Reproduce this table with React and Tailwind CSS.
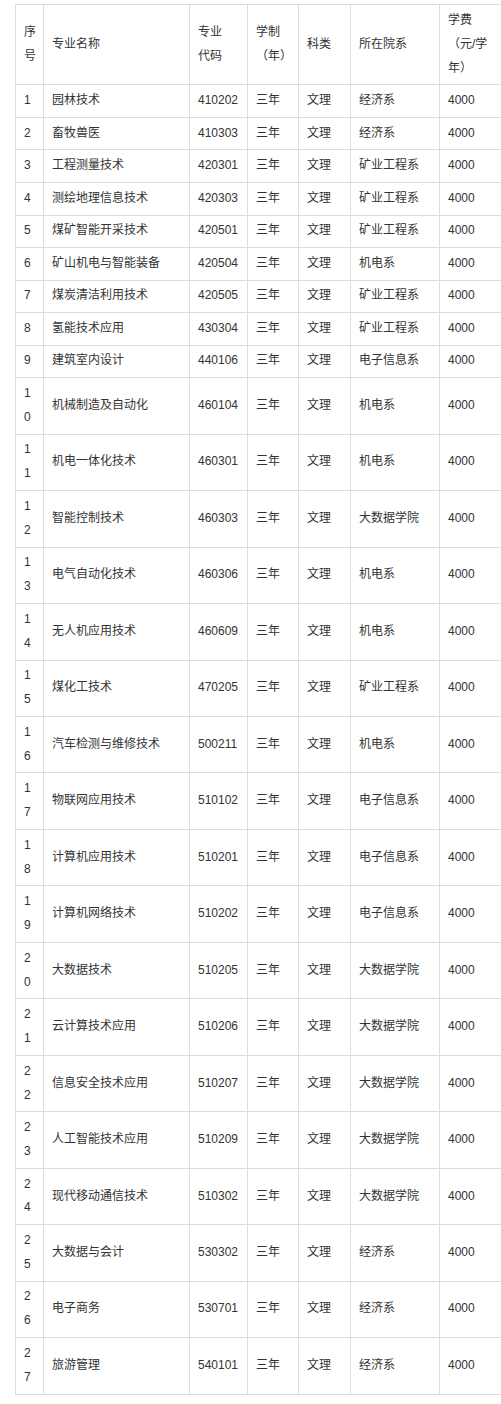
import React from "react";

const rows = [
  ["1", "园林技术", "410202", "经济系"],
  ["2", "畜牧兽医", "410303", "经济系"],
  ["3", "工程测量技术", "420301", "矿业工程系"],
  ["4", "测绘地理信息技术", "420303", "矿业工程系"],
  ["5", "煤矿智能开采技术", "420501", "矿业工程系"],
  ["6", "矿山机电与智能装备", "420504", "机电系"],
  ["7", "煤炭清洁利用技术", "420505", "矿业工程系"],
  ["8", "氢能技术应用", "430304", "矿业工程系"],
  ["9", "建筑室内设计", "440106", "电子信息系"],
  ["10", "机械制造及自动化", "460104", "机电系"],
  ["11", "机电一体化技术", "460301", "机电系"],
  ["12", "智能控制技术", "460303", "大数据学院"],
  ["13", "电气自动化技术", "460306", "机电系"],
  ["14", "无人机应用技术", "460609", "机电系"],
  ["15", "煤化工技术", "470205", "矿业工程系"],
  ["16", "汽车检测与维修技术", "500211", "机电系"],
  ["17", "物联网应用技术", "510102", "电子信息系"],
  ["18", "计算机应用技术", "510201", "电子信息系"],
  ["19", "计算机网络技术", "510202", "电子信息系"],
  ["20", "大数据技术", "510205", "大数据学院"],
  ["21", "云计算技术应用", "510206", "大数据学院"],
  ["22", "信息安全技术应用", "510207", "大数据学院"],
  ["23", "人工智能技术应用", "510209", "大数据学院"],
  ["24", "现代移动通信技术", "510302", "大数据学院"],
  ["25", "大数据与会计", "530302", "经济系"],
  ["26", "电子商务", "530701", "经济系"],
  ["27", "旅游管理", "540101", "经济系"],
];

const td =
  "border border-[#dddddd] px-2 py-[3.8px] leading-[23.94px] text-[12px] text-[#333333] align-middle text-left";

export default function App() {
  return (
    <div
      className="w-[501px] min-h-[1404px] overflow-hidden bg-white pt-[4px] pl-[15px]"
      style={{ fontFamily: '"Liberation Sans", "Noto Sans CJK SC", sans-serif' }}
    >
      <table className="table-fixed border-collapse w-[487px]">
        <colgroup>
          <col className="w-[28px]" />
          <col className="w-[146px]" />
          <col className="w-[58px]" />
          <col className="w-[51px]" />
          <col className="w-[52px]" />
          <col className="w-[89px]" />
          <col className="w-[63px]" />
        </colgroup>
        <thead>
          <tr>
            <td className={td}>
              序<br />号
            </td>
            <td className={td}>专业名称</td>
            <td className={td}>
              专业<br />代码
            </td>
            <td className={td}>
              学制<br />（年）
            </td>
            <td className={td}>科类</td>
            <td className={td}>所在院系</td>
            <td className={td + " whitespace-nowrap"}>
              学费<br />（元/学<br />年）
            </td>
          </tr>
        </thead>
        <tbody>
          {rows.map((r) => (
            <tr key={r[0]}>
              <td className={td + " break-all"}>{r[0]}</td>
              <td className={td}>{r[1]}</td>
              <td className={td + " whitespace-nowrap"}>{r[2]}</td>
              <td className={td}>三年</td>
              <td className={td}>文理</td>
              <td className={td}>{r[3]}</td>
              <td className={td}>4000</td>
            </tr>
          ))}
        </tbody>
      </table>
    </div>
  );
}
